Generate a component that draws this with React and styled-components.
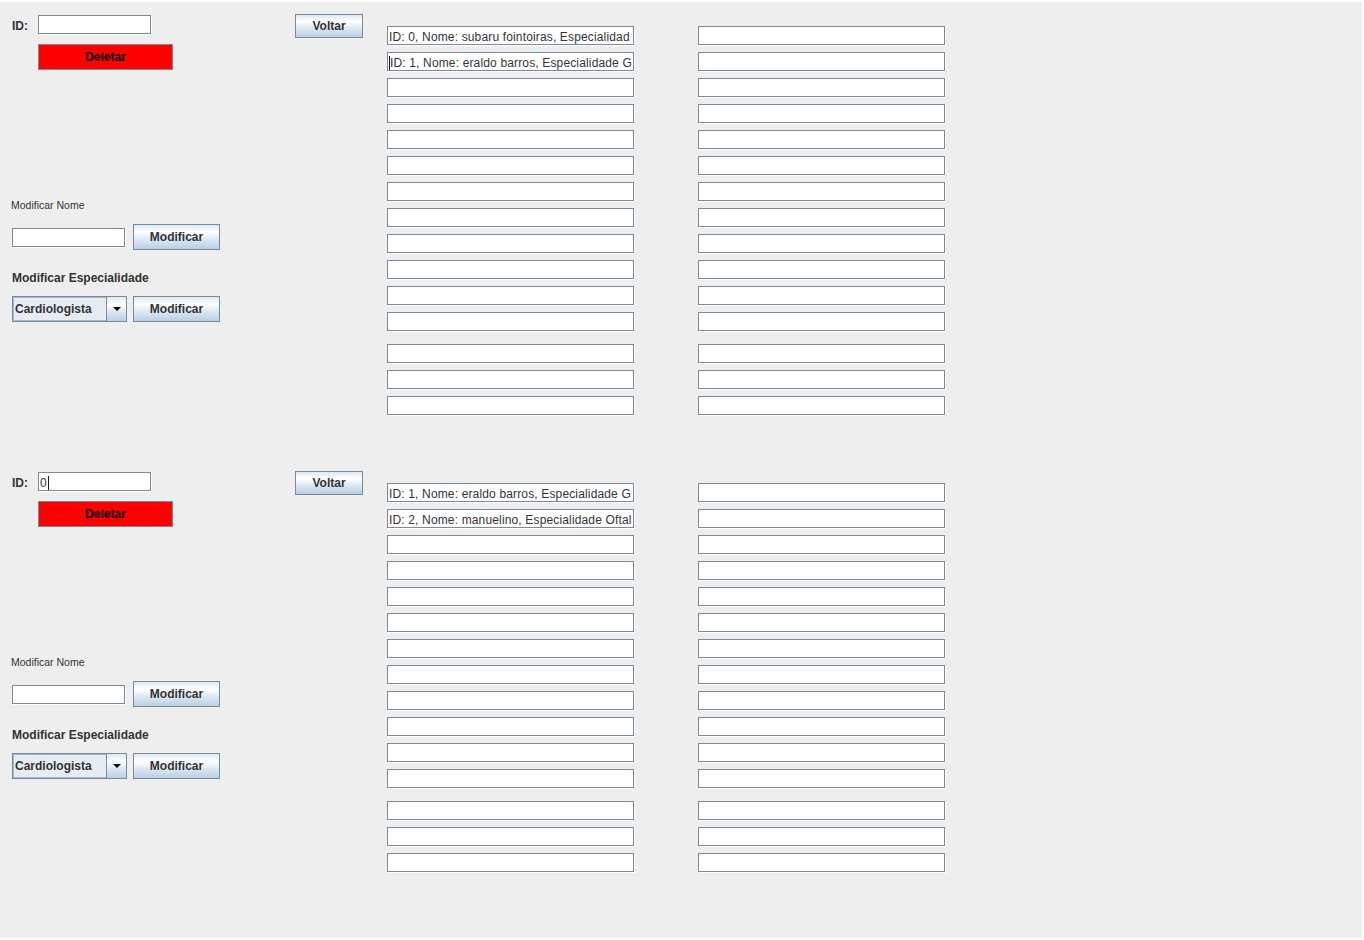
import styled, { createGlobalStyle } from "styled-components";

const GlobalStyle = createGlobalStyle`
  body {
    margin: 0;
    background: #ffffff;
    font-family: "Liberation Sans", Arial, sans-serif;
    color: #333333;
  }
`;

const Screen = styled.div`
  margin: 2px 2px 0 0;
  height: 936px;
  background: #eeeeee;
  overflow: hidden;
`;

const Panel = styled.div`
  display: flex;
  height: 457px;
`;

const FormCol = styled.div`
  width: 295px;
  padding-left: 12px;
  box-sizing: border-box;
  display: flex;
  flex-direction: column;
  align-items: flex-start;
`;

const Row = styled.div`
  display: flex;
  align-items: center;
  margin-top: ${(p) => p.top}px;
  gap: ${(p) => p.gap || 0}px;
`;

const Label = styled.div`
  font-weight: bold;
  font-size: 12px;
  line-height: 14px;
  width: ${(p) => (p.width ? p.width + "px" : "auto")};
  margin-top: ${(p) => p.top || 0}px;
`;

const SmallLabel = styled.div`
  font-size: 10.5px;
  line-height: 12px;
  margin-top: ${(p) => p.top}px;
  margin-left: -1px;
`;

const Field = styled.div`
  width: ${(p) => p.width}px;
  height: 19px;
  box-sizing: border-box;
  border: 1px solid #7a8a99;
  box-shadow: 1px 1px 0 #ffffff;
  background: #ffffff;
  padding: 3px 0 0 1px;
  margin-top: ${(p) => p.top || 0}px;
  font-size: 12px;
  letter-spacing: 0.15px;
  line-height: 15px;
  color: #333333;
  white-space: nowrap;
  overflow: hidden;
`;

const Caret = styled.span`
  display: inline-block;
  vertical-align: top;
  width: 1px;
  height: 15px;
  background: #1e1433;
  margin-left: ${(p) => (p.before ? 0 : 1)}px;
`;

const Button = styled.div`
  width: ${(p) => p.width}px;
  height: ${(p) => p.height || 26}px;
  box-sizing: border-box;
  border: 1px solid #7a8a99;
  background: ${(p) =>
    p.danger
      ? "#ff0000"
      : "linear-gradient(#dde8f3 0%, #ffffff 30%, #dde8f3 60%, #b8cfe5 100%)"};
  margin-top: ${(p) => p.top || 0}px;
  margin-left: ${(p) => p.left || 0}px;
  display: flex;
  align-items: center;
  justify-content: center;
  font-weight: bold;
  font-size: 12px;
  color: ${(p) => (p.danger ? "#000000" : "#333333")};
`;

const Combo = styled.div`
  width: 115px;
  height: 26px;
  box-sizing: border-box;
  border: 1px solid #7a8a99;
  display: flex;
  background: linear-gradient(#dde8f3 0%, #ffffff 30%, #dde8f3 60%, #b8cfe5 100%);
`;

const ComboValue = styled.div`
  flex: 1;
  border: 1px solid #a3b8cc;
  border-right: none;
  background: #e6ecf2;
  padding-left: 1px;
  display: flex;
  align-items: center;
  font-weight: bold;
  font-size: 12px;
`;

const ComboArrow = styled.div`
  width: 19px;
  border-left: 1px solid #7a8a99;
  display: flex;
  align-items: center;
  justify-content: center;
`;

const Triangle = styled.div`
  width: 0;
  height: 0;
  border-left: 4px solid transparent;
  border-right: 4px solid transparent;
  border-top: 4px solid #000000;
`;

const BackCol = styled.div`
  width: 92px;
  padding-top: 12px;
`;

const Lists = styled.div`
  display: flex;
  gap: 64px;
  padding-top: 24px;
`;

const ListCol = styled.div`
  display: flex;
  flex-direction: column;
  gap: 7px;
`;

const panels = [
  {
    id: "",
    rows: [
      "ID: 0, Nome: subaru fointoiras, Especialidad",
      "ID: 1, Nome: eraldo barros, Especialidade G",
    ],
    caretRow: 1,
  },
  {
    id: "0",
    rows: [
      "ID: 1, Nome: eraldo barros, Especialidade G",
      "ID: 2, Nome: manuelino, Especialidade Oftal",
    ],
    caretRow: -1,
  },
];

const ROWS = 15;

function ListColumn({ values = [], caretRow = -1 }) {
  return (
    <ListCol>
      {Array.from({ length: ROWS }).map((_, i) => (
        <Field key={i} width={247} top={i === 12 ? 6 : 0}>
          {i === caretRow && <Caret before />}
          {values[i] || ""}
        </Field>
      ))}
    </ListCol>
  );
}

function MedicoPanel({ data }) {
  return (
    <Panel>
      <FormCol>
        <Row top={13}>
          <Label width={26} top={2}>
            ID:
          </Label>
          <Field width={113}>
            {data.id}
            {data.id && <Caret />}
          </Field>
        </Row>
        <Button danger width={135} top={10} left={26}>
          Deletar
        </Button>

        <SmallLabel top={129}>Modificar Nome</SmallLabel>
        <Row top={13} gap={8}>
          <Field width={113} />
          <Button width={87}>Modificar</Button>
        </Row>

        <Label top={21}>Modificar Especialidade</Label>
        <Row top={11} gap={6}>
          <Combo>
            <ComboValue>Cardiologista</ComboValue>
            <ComboArrow>
              <Triangle />
            </ComboArrow>
          </Combo>
          <Button width={87}>Modificar</Button>
        </Row>
      </FormCol>

      <BackCol>
        <Button width={68} height={24}>
          Voltar
        </Button>
      </BackCol>

      <Lists>
        <ListColumn values={data.rows} caretRow={data.caretRow} />
        <ListColumn />
      </Lists>
    </Panel>
  );
}

export default function App() {
  return (
    <>
      <GlobalStyle />
      <Screen>
        {panels.map((p, i) => (
          <MedicoPanel key={i} data={p} />
        ))}
      </Screen>
    </>
  );
}
